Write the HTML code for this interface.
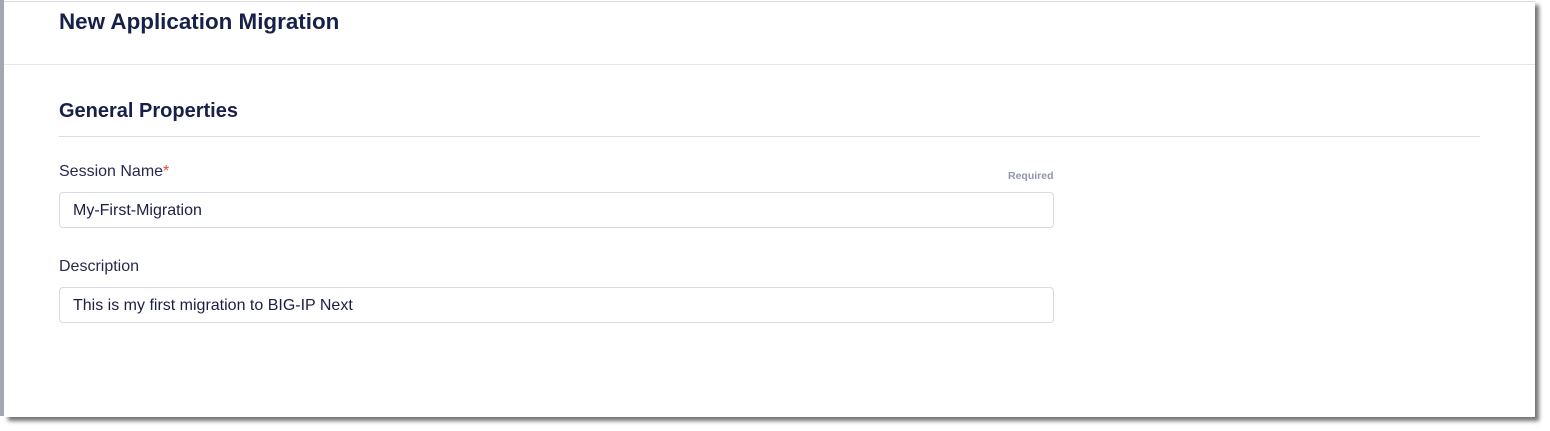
<!DOCTYPE html>
<html><head><style>
body{margin:0;width:1550px;height:431px;background:#fff;position:relative;overflow:hidden;font-family:"Liberation Sans",Arial,sans-serif;color:#1b2048}
.strip{position:absolute;left:0;top:0;width:4px;height:416px;background:#a4a7b0}
.card{position:absolute;left:4px;top:1px;width:1531px;height:415px;background:#fff;border-top:1px solid #ddd;box-shadow:4px 4px 4px rgba(0,0,0,.55)}
.t{position:absolute;white-space:nowrap}
.inp{position:absolute;left:59px;width:995px;height:36px;border:1px solid #d8dae3;border-radius:4px;box-sizing:border-box}
</style></head><body>
<div class="strip"></div>
<div class="card"></div>
<div class="t" style="left:59px;top:9px;font-size:22.4px;font-weight:bold;color:#172048">New Application Migration</div>
<div style="position:absolute;left:4px;top:64px;width:1531px;height:1px;background:#e3e5ef"></div>
<div class="t" style="left:59px;top:100px;font-size:20px;font-weight:bold;color:#172048">General Properties</div>
<div style="position:absolute;left:59px;top:136px;width:1421px;height:1px;background:#dcdde2"></div>
<div class="t" style="left:59px;top:163px;font-size:16px;color:#262b4d">Session Name<span style="color:#e8453c">*</span></div>
<div class="t" style="left:1008px;top:170px;font-size:10.5px;font-weight:bold;color:#9096ad">Required</div>
<div class="inp" style="top:192px"></div>
<div class="t" style="left:73px;top:202px;font-size:16px;color:#1b1f45">My-First-Migration</div>
<div class="t" style="left:59px;top:258px;font-size:16px;color:#262b4d">Description</div>
<div class="inp" style="top:287px"></div>
<div class="t" style="left:73px;top:297px;font-size:16px;color:#1b1f45">This is my first migration to BIG-IP Next</div>
</body></html>
